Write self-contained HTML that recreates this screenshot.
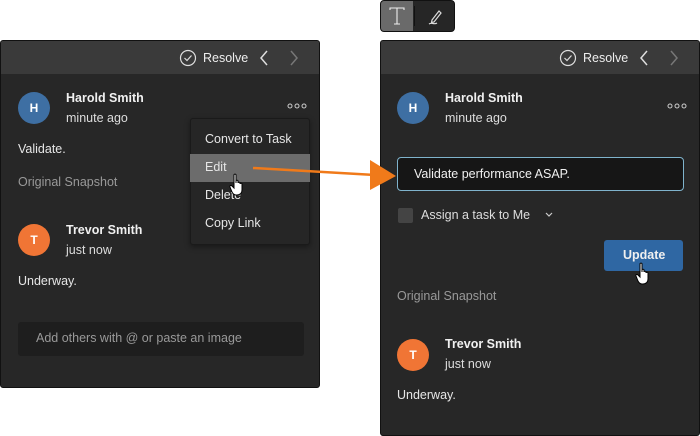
<!DOCTYPE html>
<html><head><style>
*{margin:0;padding:0;box-sizing:border-box}
body{width:700px;height:436px;background:#fff;position:relative;font-family:"Liberation Sans",sans-serif;overflow:hidden}
.a{position:absolute}
.panel{position:absolute;background:#272727;border:1px solid #111;border-radius:3px;overflow:hidden}
.hdr{position:absolute;left:0;right:0;top:0;height:33px;background:#3a3a3a}
.t{position:absolute;white-space:nowrap;color:#e6e6e6;font-size:12.5px}
.b{font-weight:bold;color:#f0f0f0}
.g{color:#b0b0b0}
.av{position:absolute;width:32px;height:32px;border-radius:50%;color:#fff;font-weight:bold;font-size:12px;text-align:center;line-height:32px}
</style></head><body>

<!-- toolbar -->
<div class="a" style="left:380px;top:0;width:75px;height:32px;background:#262626;border-radius:4px;border:1px solid #111"></div>
<div class="a" style="left:381px;top:1px;width:32px;height:30px;background:#6a6a6a;border-radius:3px 0 0 3px"></div>
<svg class="a" style="left:387px;top:5px" width="20" height="22" viewBox="0 0 20 22" fill="none" stroke="#eee" stroke-width="1.1"><path d="M3 5 L3 3 L17 3 L17 5 M10 3 L10 19 M7 19 L13 19"/></svg>
<div class="a" style="left:414px;top:6px;width:1px;height:20px;background:#111"></div>
<svg class="a" style="left:424px;top:5px" width="22" height="22" viewBox="0 0 22 22" fill="none" stroke="#ddd" stroke-width="1.2"><path d="M8 15 L15 6 L17 8 L10 17 L7.5 17.5 Z"/><path d="M5 19 C8 17 10 20 13 18"/></svg>

<!-- left panel -->
<div class="panel" style="left:0;top:40px;width:320px;height:348px">
  <div class="hdr"></div>
  <svg class="a" style="left:178px;top:8px" width="18" height="18" viewBox="0 0 18 18" fill="none" stroke="#ddd" stroke-width="1.2"><circle cx="9" cy="9" r="7.5"/><path d="M5.5 9 L8 11.5 L12.5 6.5"/></svg>
  <div class="t" style="left:202px;top:10px;color:#eee">Resolve</div>
  <svg class="a" style="left:256px;top:7px" width="14" height="20" viewBox="0 0 14 20" fill="none" stroke="#ddd" stroke-width="1.5"><path d="M10 3 L4 10 L10 17"/></svg>
  <svg class="a" style="left:286px;top:7px" width="14" height="20" viewBox="0 0 14 20" fill="none" stroke="#777" stroke-width="1.5"><path d="M4 3 L10 10 L4 17"/></svg>
  <div class="av" style="left:17px;top:51px;background:#3e6fa3">H</div>
  <div class="t b" style="left:65px;top:50px">Harold Smith</div>
  <div class="t" style="left:65px;top:70px;color:#ddd">minute ago</div>
  <svg class="a" style="left:286px;top:62px" width="20" height="6" viewBox="0 0 20 6" fill="none" stroke="#ccc" stroke-width="1"><circle cx="3" cy="3" r="2"/><circle cx="10" cy="3" r="2"/><circle cx="17" cy="3" r="2"/></svg>
  <div class="t" style="left:17px;top:101px">Validate.</div>
  <div class="t g" style="left:17px;top:134px;color:#999">Original Snapshot</div>
  <div class="av" style="left:17px;top:183px;background:#f07535">T</div>
  <div class="t b" style="left:65px;top:182px">Trevor Smith</div>
  <div class="t" style="left:65px;top:202px;color:#ddd">just now</div>
  <div class="t" style="left:17px;top:233px">Underway.</div>
  <div class="a" style="left:17px;top:281px;width:286px;height:34px;background:#1e1e1e;border-radius:3px"></div>
  <div class="t" style="left:35px;top:290px;color:#999">Add others with @ or paste an image</div>
</div>

<!-- menu -->
<div class="a" style="left:190px;top:118px;width:120px;height:127px;background:#262626;border:1px solid #1a1a1a;border-radius:3px;box-shadow:0 2px 6px rgba(0,0,0,.4)"></div>
<div class="a" style="left:190px;top:154px;width:120px;height:28px;background:#6c6c6c"></div>
<div class="t" style="left:205px;top:132px">Convert to Task</div>
<div class="t" style="left:205px;top:160px">Edit</div>
<div class="t" style="left:205px;top:188px">Delete</div>
<div class="t" style="left:205px;top:216px">Copy Link</div>

<!-- right panel -->
<div class="panel" style="left:380px;top:40px;width:320px;height:396px">
  <div class="hdr"></div>
  <svg class="a" style="left:178px;top:8px" width="18" height="18" viewBox="0 0 18 18" fill="none" stroke="#ddd" stroke-width="1.2"><circle cx="9" cy="9" r="7.5"/><path d="M5.5 9 L8 11.5 L12.5 6.5"/></svg>
  <div class="t" style="left:202px;top:10px;color:#eee">Resolve</div>
  <svg class="a" style="left:256px;top:7px" width="14" height="20" viewBox="0 0 14 20" fill="none" stroke="#ddd" stroke-width="1.5"><path d="M10 3 L4 10 L10 17"/></svg>
  <svg class="a" style="left:286px;top:7px" width="14" height="20" viewBox="0 0 14 20" fill="none" stroke="#777" stroke-width="1.5"><path d="M4 3 L10 10 L4 17"/></svg>
  <div class="av" style="left:16px;top:51px;background:#3e6fa3">H</div>
  <div class="t b" style="left:64px;top:50px">Harold Smith</div>
  <div class="t" style="left:64px;top:70px;color:#ddd">minute ago</div>
  <svg class="a" style="left:286px;top:62px" width="20" height="6" viewBox="0 0 20 6" fill="none" stroke="#ccc" stroke-width="1"><circle cx="3" cy="3" r="2"/><circle cx="10" cy="3" r="2"/><circle cx="17" cy="3" r="2"/></svg>
  <div class="a" style="left:16px;top:116px;width:287px;height:34px;background:#161616;border:1px solid #7fb3cc;border-radius:4px"></div>
  <div class="t" style="left:33px;top:126px;color:#f0f0f0">Validate performance ASAP.</div>
  <div class="a" style="left:17px;top:167px;width:15px;height:15px;background:#444;border-radius:2px"></div>
  <div class="t" style="left:40px;top:167px;color:#ddd">Assign a task to Me</div>
  <svg class="a" style="left:163px;top:170px" width="10" height="8" viewBox="0 0 10 8" fill="none" stroke="#ccc" stroke-width="1.2"><path d="M2 2 L5 5 L8 2"/></svg>
  <div class="a" style="left:223px;top:199px;width:79px;height:31px;background:#2f67a3;border-radius:3px"></div>
  <div class="t b" style="left:242px;top:207px">Update</div>
  <div class="t" style="left:16px;top:248px;color:#999">Original Snapshot</div>
  <div class="av" style="left:16px;top:298px;background:#f07535">T</div>
  <div class="t b" style="left:64px;top:296px">Trevor Smith</div>
  <div class="t" style="left:64px;top:316px;color:#ddd">just now</div>
  <div class="t" style="left:16px;top:347px">Underway.</div>
</div>

<!-- arrow -->
<svg class="a" style="left:0;top:0" width="700" height="436">
  <line x1="253" y1="168" x2="375" y2="175" stroke="#f07a1a" stroke-width="2.5"/>
  <polygon points="370,160 396,176 370,190" fill="#f07a1a"/>
</svg>

<!-- hand cursors -->
<svg class="a" style="left:228px;top:173px" width="20" height="24" viewBox="0 0 20 24"><path d="M6 2 C6 0.8 8 0.8 8 2 L8 10 L8 8 C8 7 10 7 10 8 L10 10 C10 9 12 9 12 10 L12 11 C12 10 14 10 14 11 L14 17 C14 20 12 22 9 22 L8 22 C6 22 5 21 4 19 L2 14 C1.5 12.5 3 12 4 13 L6 15 Z" fill="#fff" stroke="#000" stroke-width="1"/></svg>
<svg class="a" style="left:634px;top:262px" width="20" height="24" viewBox="0 0 20 24"><path d="M6 2 C6 0.8 8 0.8 8 2 L8 10 L8 8 C8 7 10 7 10 8 L10 10 C10 9 12 9 12 10 L12 11 C12 10 14 10 14 11 L14 17 C14 20 12 22 9 22 L8 22 C6 22 5 21 4 19 L2 14 C1.5 12.5 3 12 4 13 L6 15 Z" fill="#fff" stroke="#000" stroke-width="1"/></svg>
</body></html>
